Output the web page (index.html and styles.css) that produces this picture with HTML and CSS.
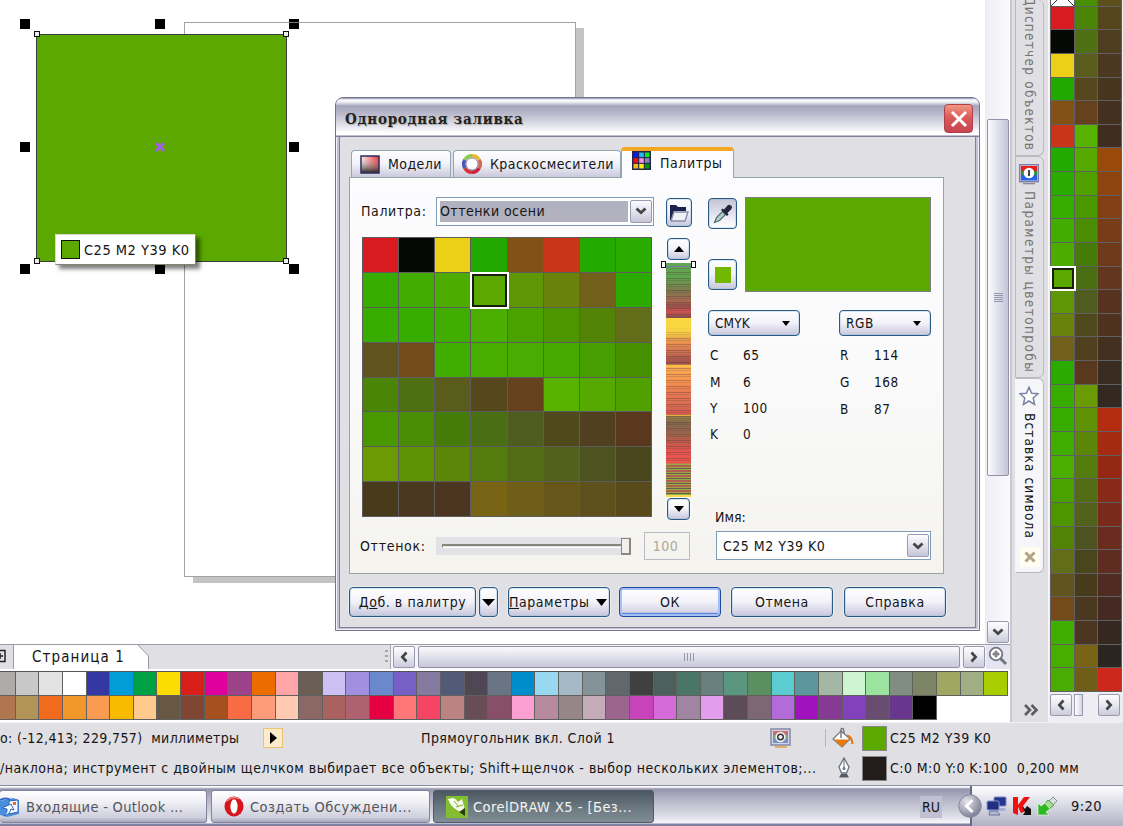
FILE: index.html
```html
<!DOCTYPE html>
<html lang="ru">
<head>
<meta charset="utf-8">
<title>CorelDRAW X5</title>
<link rel="stylesheet" href="styles.css">
</head>
<body>
<div class="app">
  <div class="workspace">
    <div class="document">
      <div class="doc-main">
        <div class="canvas">
          <div class="page-shadow"></div>
          <div class="page"></div>
          <i class="handle h1"></i><i class="handle h2"></i><i class="handle h3"></i>
          <i class="handle h4"></i><i class="handle h5"></i>
          <i class="handle h6"></i><i class="handle h7"></i><i class="handle h8"></i>
          <div class="shape">
            <i class="node n1"></i><i class="node n2"></i><i class="node n3"></i><i class="node n4"></i>
            <svg class="center-mark" width="10" height="10" viewBox="0 0 10 10"><path d="M1 1L9 9M9 1L1 9" stroke="#a65cf0" stroke-width="2.8"/></svg>
          </div>
          <div class="page-line"></div>
          <div class="tip"><i class="tip-swatch"></i><span>C25 M2 Y39 K0</span></div>
        </div>
        <div class="vscroll">
          <div class="vthumb"><i></i><i></i><i></i><i></i><i></i></div>
          <div class="sbtn vdown"><svg width="12" height="8" viewBox="0 0 12 8"><path d="M1.5 1.5L6 5.7L10.5 1.5" fill="none" stroke="#444" stroke-width="2.8"/></svg></div>
        </div>
      </div>
      <div class="doc-bottom">
        <div class="pages">
          <svg class="add-page" width="6" height="16" viewBox="0 0 6 16"><path d="M0 2.5H5V13.5H0M0 8H3M0 5V11" fill="none" stroke="#222" stroke-width="1.5"/></svg>
          <div class="page-tab">
            <svg width="136" height="24" viewBox="0 0 136 24"><path d="M0 0H125L135.5 11V24H0Z" fill="#fff"/><path d="M0.5 0V24M125 0L135.5 11V24" fill="none" stroke="#9a9aa4"/></svg>
            <span>Страница 1</span>
          </div>
          <div class="dots"></div>
        </div>
        <div class="hscroll">
          <div class="sbtn"><svg width="8" height="12" viewBox="0 0 8 12"><path d="M6.5 1.5L2.3 6L6.5 10.5" fill="none" stroke="#444" stroke-width="2.6"/></svg></div>
          <div class="hthumb"><i></i><i></i><i></i><i></i></div>
          <div class="sbtn"><svg width="8" height="12" viewBox="0 0 8 12"><path d="M1.5 1.5L5.7 6L1.5 10.5" fill="none" stroke="#444" stroke-width="2.6"/></svg></div>
        </div>
        <div class="zoomer"><svg width="20" height="20" viewBox="0 0 20 20"><circle cx="8" cy="8" r="6.3" fill="#fff" stroke="#74747c" stroke-width="1.8"/><path d="M8 4.5V11.5M4.5 8H11.5" stroke="#74747c" stroke-width="1.3"/><circle cx="8" cy="8" r="2.4" fill="none" stroke="#74747c"/><path d="M12.5 12.5L18 18" stroke="#74747c" stroke-width="2.8"/></svg></div>
      </div>
      <div class="doc-palette" id="docPalette"></div>
    </div>

    <div class="dockers">
      <div class="dtab t1"><span>Диспетчер объектов</span></div>
      <div class="dtab t2">
        <svg width="20" height="22" viewBox="0 0 20 22"><rect x=".7" y="1.7" width="18.6" height="17" fill="#d8d8ec" stroke="#7d7da8" stroke-width="1.4"/><rect x="2" y="3" width="16" height="5" fill="#e8201c"/><rect x="2" y="8" width="16" height="4" fill="#2a9030"/><rect x="2" y="12" width="16" height="5.5" fill="#2464e8"/><circle cx="10" cy="10" r="5.3" fill="#fff"/><path d="M10 7V13" stroke="#223" stroke-width="1.7"/><path d="M4 20.6H16" stroke="#8a8a9a" stroke-width="1.4"/></svg>
        <span>Параметры цветопробы</span>
      </div>
      <div class="dtab t3">
        <svg width="20" height="20" viewBox="0 0 20 20"><path d="M10 1.2L12.6 7.2L19 7.7L14.2 12L15.6 18.5L10 15L4.4 18.5L5.8 12L1 7.7L7.4 7.2Z" fill="#fff" stroke="#7984a0" stroke-width="1.5"/></svg>
        <span>Вставка символа</span>
        <div class="dclose"><svg width="12" height="12" viewBox="0 0 12 12"><path d="M1.5 1.5L10.5 10.5M10.5 1.5L1.5 10.5" stroke="#b3a386" stroke-width="3"/></svg></div>
      </div>
      <svg class="more" width="16" height="12" viewBox="0 0 16 12"><path d="M2 1L7 6L2 11M8.5 1L13.5 6L8.5 11" fill="none" stroke="#5c5c5c" stroke-width="2.6"/></svg>
    </div>

    <div class="side">
      <div class="side-palette" id="sidePalette"></div>
      <div class="side-scroll">
        <div class="sbtn"><svg width="8" height="12" viewBox="0 0 8 12"><path d="M6.5 1.5L2.3 6L6.5 10.5" fill="none" stroke="#444" stroke-width="2.6"/></svg></div>
        <div class="mini-thumb"></div>
        <div class="sbtn right"><svg width="8" height="12" viewBox="0 0 8 12"><path d="M1.5 1.5L5.7 6L1.5 10.5" fill="none" stroke="#444" stroke-width="2.6"/></svg></div>
      </div>
    </div>
  </div>

  <div class="status">
    <div class="status-row">
      <span class="coords">о: (-12,413; 229,757)&nbsp; миллиметры</span>
      <div class="play"><svg width="9" height="12" viewBox="0 0 9 12"><path d="M1 0L8 6L1 12Z" fill="#000"/></svg></div>
      <span class="object">Прямоугольник вкл. Слой 1</span>
      <svg class="proof" width="22" height="20" viewBox="0 0 22 20"><rect x="1" y="1" width="19" height="16" fill="#d5d5e5" stroke="#8080a0" stroke-width="1.4"/><rect x="3" y="3" width="15" height="4" fill="#c86c6c"/><rect x="3" y="7" width="15" height="4" fill="#77a477"/><rect x="3" y="11" width="15" height="4" fill="#6f92cc"/><circle cx="10.5" cy="9" r="5.2" fill="#eee"/><circle cx="10.5" cy="9" r="2.8" fill="none" stroke="#333" stroke-width="1.4"/><path d="M5 19H17" stroke="#dfa64c" stroke-width="1.6"/></svg>
      <i class="status-sep"></i>
      <svg class="fill-icon" width="22" height="22" viewBox="0 0 22 22"><path d="M9 4L18 12L10 20L1 12Z" fill="#fff" stroke="#777" stroke-width="1.2"/><path d="M2 12.5H17L10 20Z" fill="#e87a0c"/><path d="M9 11V3Q9 .8 11 1.5Q12 2 12 7" fill="none" stroke="#667" stroke-width="1.3"/><path d="M15 8.5Q20 9.5 20.5 17" fill="none" stroke="#e87a0c" stroke-width="2.2"/></svg>
      <i class="chip fill-chip"></i>
      <span class="chip-text">C25 M2 Y39 K0</span>
    </div>
    <div class="status-row second">
      <span class="hint">/наклона; инструмент с двойным щелчком выбирает все объекты; Shift+щелчок - выбор нескольких элементов;...</span>
      <svg class="pen-icon" width="14" height="22" viewBox="0 0 14 22"><path d="M7 1L12 10L9.5 16H4.5L2 10Z" fill="#fff" stroke="#6a7080" stroke-width="1.3"/><path d="M7 2V11" stroke="#6a7080"/><circle cx="7" cy="11.5" r="1.5" fill="#6a7080"/><path d="M4 17H10L12 20.5H2Z" fill="#555a68"/></svg>
      <i class="chip pen-chip"></i>
      <span class="chip-text">C:0 M:0 Y:0 K:100&nbsp; 0,200 мм</span>
    </div>
  </div>

  <div class="taskbar">
    <div class="task outlook">
      <svg width="20" height="22" viewBox="0 0 20 22"><path d="M0 5L13 2L19 4V18L7 21L0 19Z" fill="#4a8fdc"/><path d="M9 5L18 4V16L9 18Z" fill="#f5f9ff" stroke="#3563b0"/><path d="M0 4Q7 1 10 4" fill="none" stroke="#2b67c8" stroke-width="2"/><path d="M2 12L11 8L14 14L11 13Q10 18 4 20Q8 16 7 13Z" fill="#fff" stroke="#2b67c8"/><rect x="13" y="6" width="3" height="3" fill="#e06a3a"/></svg>
      <span>Входящие - Outlook ...</span>
    </div>
    <div class="task opera">
      <svg width="20" height="21" viewBox="0 0 20 21"><ellipse cx="10" cy="10.5" rx="9.5" ry="10" fill="#d6161c"/><ellipse cx="10" cy="10.5" rx="3.6" ry="7.2" fill="#fff"/><path d="M3 5Q9 -1 15 3" stroke="#f58080" fill="none" stroke-width="1.5"/></svg>
      <span>Создать Обсуждени...</span>
    </div>
    <div class="task corel">
      <svg width="22" height="22" viewBox="0 0 22 22"><rect width="22" height="22" fill="#84bc32"/><path d="M2 3L8 2L10 8L5 9Z" fill="#fff"/><path d="M5 9L9 2.5L12 6L16 3L18.5 12L14 16L8 12Z" fill="#f6fae8"/><path d="M8 5L13 11M10 11L17 9" stroke="#84a840"/><path d="M13 16L19 12L19 20Z" fill="#28400c"/></svg>
      <span>CorelDRAW X5 - [Без...</span>
    </div>
    <div class="lang">RU</div>
    <div class="tray">
      <div class="tray-arrow"><svg width="24" height="26" viewBox="0 0 24 26"><defs><radialGradient id="ball" cx=".35" cy=".3" r=".8"><stop offset="0" stop-color="#e4e4ec"/><stop offset="1" stop-color="#74748c"/></radialGradient></defs><circle cx="12" cy="13" r="11.3" fill="url(#ball)" stroke="#8a8aa0"/><path d="M14.5 7L8.5 13L14.5 19" fill="none" stroke="#fff" stroke-width="3"/></svg></div>
      <svg class="net" width="21" height="21" viewBox="0 0 21 21"><rect x="8" y="1" width="12" height="9" rx="1" fill="#27348c" stroke="#7d88c8"/><path d="M11 12H19L20 15H11Z" fill="#a9b0cc"/><rect x="1" y="5" width="12" height="9" rx="1" fill="#233080" stroke="#8994d0"/><path d="M4 15H11L14 19H3Z" fill="#b3b9d2" stroke="#6a739a"/></svg>
      <svg class="kav" width="20" height="21" viewBox="0 0 20 21"><path d="M1 1H6V9L12 1H18L11 10L14 15L9 17L6 11V19L1 17Z" fill="#f01010"/><path d="M10 10L13 13L15 10L19 13V19H11L13 16Z" fill="#111"/></svg>
      <svg class="usb" width="21" height="21" viewBox="0 0 21 21"><path d="M12 5L16 1L20 5L16 9Z" fill="#d8e0e0" stroke="#829a92"/><path d="M6 10L11 4L17 9L11 14Z" fill="#a4dc90" stroke="#4ea040"/><path d="M1 7L4 10L8 7L13 13L9 16L12 19H1Z" fill="#2cba20" stroke="#fff" stroke-width=".6"/></svg>
      <span class="clock">9:20</span>
    </div>
  </div>

  <div class="dialog">
    <div class="title"><span>Однородная заливка</span>
      <div class="close"><svg width="18" height="18" viewBox="0 0 18 18"><path d="M2 2L16 16M16 2L2 16" stroke="#fff" stroke-width="3"/></svg></div>
    </div>
    <div class="dialog-body">
      <div class="tabs">
        <div class="tab models">
          <svg width="20" height="19" viewBox="0 0 20 19"><defs><linearGradient id="mg" x1="0" y1="0" x2="0" y2="1"><stop offset="0" stop-color="#fff" stop-opacity="0"/><stop offset="1" stop-color="#222"/></linearGradient><linearGradient id="mr"><stop offset="0" stop-color="#f4eeee"/><stop offset="1" stop-color="#f01c20"/></linearGradient></defs><rect x="1" y="1" width="18" height="17" fill="url(#mr)"/><rect x="1" y="1" width="18" height="17" fill="url(#mg)" stroke="#2c2c60" stroke-width="1.5"/></svg>
          <span>Модели</span>
        </div>
        <div class="tab mixers">
          <svg width="22" height="22" viewBox="0 0 22 22"><g fill="none" stroke-width="3.6"><path d="M11 2.8A8.2 8.2 0 0 1 18.1 6.9" stroke="#e8b830"/><path d="M18.1 6.9A8.2 8.2 0 0 1 18.1 15.1" stroke="#d06a50"/><path d="M18.1 15.1A8.2 8.2 0 0 1 11 19.2" stroke="#cc2440"/><path d="M11 19.2A8.2 8.2 0 0 1 3.9 15.1" stroke="#d83030"/><path d="M3.9 15.1A8.2 8.2 0 0 1 3.9 6.9" stroke="#4858b8"/><path d="M3.9 6.9A8.2 8.2 0 0 1 11 2.8" stroke="#8cc850"/></g><circle cx="11" cy="11" r="6" fill="#fff" stroke="#8a88b0"/></svg>
          <span>Краскосмесители</span>
        </div>
        <div class="tab palettes">
          <svg width="19" height="19" viewBox="0 0 19 19"><rect width="19" height="19" fill="#22264e"/><path d="M1.5 1.5h4.6v4.6h-4.6z" fill="#0a18f0"/><path d="M7.2 1.5h4.6v4.6h-4.6z" fill="#28b8f0"/><path d="M12.9 1.5h4.6v4.6h-4.6z" fill="#10e820"/><path d="M1.5 7.2h4.6v4.6h-4.6z" fill="#f01010"/><path d="M7.2 7.2h4.6v4.6h-4.6z" fill="#f890f0"/><path d="M12.9 7.2h4.6v4.6h-4.6z" fill="#8888a8"/><path d="M1.5 12.9h4.6v4.6h-4.6z" fill="#f8b810"/><path d="M7.2 12.9h4.6v4.6h-4.6z" fill="#f8f010"/><path d="M12.9 12.9h4.6v4.6h-4.6z" fill="#08900c"/></svg>
          <span>Палитры</span>
        </div>
      </div>
      <div class="panel">
        <div class="col-left">
          <div class="palette-row">
            <label>Палитра:</label>
            <div class="combo palette-combo"><span class="sel">Оттенки осени</span><div class="drop"><svg width="12" height="8" viewBox="0 0 12 8"><path d="M1.5 1.5L6 5.7L10.5 1.5" fill="none" stroke="#444" stroke-width="2.8"/></svg></div></div>
          </div>
          <div class="swatches" id="swatches"></div>
          <div class="tint-row">
            <label>Оттенок:</label>
            <div class="slider"><i class="track"></i><i class="knob"></i></div>
            <div class="tint-value">100</div>
          </div>
        </div>
        <div class="col-mid">
          <div class="btn open"><svg width="22" height="20" viewBox="0 0 22 20"><path d="M2 17V2H8L10 4H18V8H6L3 17Z" fill="#1c2250"/><path d="M6 9H20L17 18H3Z" fill="#eef0f8" stroke="#8a8ea8" stroke-width="1.4"/></svg></div>
          <div class="btn small up"><svg width="10" height="6" viewBox="0 0 10 6"><path d="M5 0L10 6H0Z" fill="#000"/></svg></div>
          <div class="strip"><i class="strip-mark"></i></div>
          <div class="btn small"><svg width="10" height="6" viewBox="0 0 10 6"><path d="M0 0H10L5 6Z" fill="#000"/></svg></div>
        </div>
        <div class="col-right">
          <div class="sample-row">
            <div class="tools">
              <div class="btn tool pressed"><svg width="20" height="20" viewBox="0 0 20 20"><path d="M1.5 18.5L3.5 13.5L9.5 7.5L12.5 10.5L6.5 16.5Z" fill="#b2d0c8" stroke="#4b6c70" stroke-width="1.2"/><path d="M8 6L14 12L15.5 10.5L14.5 9L18 5.5Q20 3 18 1.5Q16 0 14 2L11 5.5L9.5 4.5Z" fill="#24263e"/></svg></div>
              <div class="btn tool"><i class="tool-color"></i></div>
            </div>
            <div class="preview"></div>
          </div>
          <div class="model-row">
            <div class="btn model"><span>CMYK</span><svg width="8" height="5" viewBox="0 0 8 5"><path d="M0 0H8L4 5Z" fill="#000"/></svg></div>
            <div class="btn model"><span class="rgb">RGB</span><svg width="8" height="5" viewBox="0 0 8 5"><path d="M0 0H8L4 5Z" fill="#000"/></svg></div>
          </div>
          <div class="values">
            <dl class="cmyk"><dt>C</dt><dd>65</dd><dt>M</dt><dd>6</dd><dt>Y</dt><dd>100</dd><dt>K</dt><dd>0</dd></dl>
            <dl class="rgbv"><dt>R</dt><dd>114</dd><dt>G</dt><dd>168</dd><dt>B</dt><dd>87</dd></dl>
          </div>
          <label class="name-label">Имя:</label>
          <div class="combo name-combo"><span>C25 M2 Y39 K0</span><div class="drop"><svg width="12" height="8" viewBox="0 0 12 8"><path d="M1.5 1.5L6 5.7L10.5 1.5" fill="none" stroke="#444" stroke-width="2.8"/></svg></div></div>
        </div>
      </div>
      <div class="actions">
        <div class="btn b-add"><span>Д<u>о</u>б. в палитру</span></div>
        <div class="btn b-drop"><svg width="13" height="7" viewBox="0 0 13 7"><path d="M0 0H13L6.5 7Z" fill="#000"/></svg></div>
        <div class="btn b-par"><span><u>П</u>араметры</span><svg width="11" height="7" viewBox="0 0 11 7"><path d="M0 0H11L5.5 7Z" fill="#000"/></svg></div>
        <div class="btn b-ok"><span>ОК</span></div>
        <div class="btn b-cancel"><span>Отмена</span></div>
        <div class="btn b-help"><span>Справка</span></div>
      </div>
    </div>
  </div>
</div>
<script src="app.js"></script>
</body>
</html>
```
FILE: styles.css
```css
* { box-sizing: border-box; }
body { margin: 0; background: #e0dfe4; overflow: hidden; color: #151515;
  font-family: "DejaVu Sans Condensed", "DejaVu Sans", "Noto Sans", sans-serif; font-stretch: condensed; font-size: 14px; white-space: nowrap; }
svg { display: block; flex: none; }
i { display: block; flex: none; }
.app { position: relative; width: 1123px; height: 826px; display: flex; flex-direction: column; overflow: hidden; }
.workspace { display: flex; height: 722px; flex: none; }

/* document window */
.document { width: 1010px; display: flex; flex-direction: column; background: #fff; flex: none; }
.doc-main { display: flex; height: 644px; }
.canvas { position: relative; width: 986px; height: 644px; background: #fff; overflow: hidden; border-right: 1px solid #ececf2; }
.page-shadow { position: absolute; left: 193px; top: 28px; width: 391px; height: 555px; background: #c3c3c3; }
.page { position: absolute; left: 184px; top: 22px; width: 392px; height: 555px; background: #fff; border: 1px solid #a2a2a2; }
.page-line { position: absolute; left: 289px; top: 22px; width: 10px; height: 1px; background: #777; }
.handle { position: absolute; width: 10px; height: 10px; background: #000; }
.h1, .h2, .h3 { top: 19px; } .h4, .h5 { top: 142px; } .h6, .h7, .h8 { top: 264px; }
.h1, .h4, .h6 { left: 20px; } .h2, .h7 { left: 155px; } .h3, .h5, .h8 { left: 289px; }
.shape { position: absolute; left: 36px; top: 34px; width: 251px; height: 228px; background: #5aa800; border: 1px solid #3b3b3b; }
.node { position: absolute; width: 6px; height: 6px; background: #eee; border: 1px solid #111; }
.n1 { left: -3px; top: -4px; } .n2 { right: -3px; top: -4px; } .n3 { left: -3px; bottom: -3px; } .n4 { right: -3px; bottom: -3px; }
.center-mark { position: absolute; left: 118px; top: 107px; }
.tip { position: absolute; left: 55px; top: 234px; width: 141px; height: 31px; display: flex; align-items: center; padding-left: 5px; gap: 4px; background: #fff; border: 1px solid #ddd8c8; border-right-color: #888070; border-bottom-color: #888070; box-shadow: 4px 4px 4px rgba(0,0,0,.5); font-size: 14.5px; letter-spacing: .5px; }
.tip-swatch { width: 19px; height: 19px; background: #5aa800; border: 1px solid #111; }

/* scroll bars */
.vscroll { width: 24px; padding: 119px 1px 1px 1px; display: flex; flex-direction: column; justify-content: space-between; background: linear-gradient(90deg, #eeeef4, #fbfbfe); }
.vthumb { height: 357px; border: 1px solid #9292a6; border-radius: 2px; background: linear-gradient(90deg, #fbfbfe, #e3e3ee 45%, #c4c4d8); display: flex; flex-direction: column; align-items: center; justify-content: center; gap: 1px; }
.vthumb i { width: 9px; height: 1px; background: #8f98ac; }
.sbtn { width: 22px; height: 22px; flex: none; border: 1px solid #9a9aae; border-radius: 2px; background: linear-gradient(#fdfdff, #e8e8f0 50%, #cbcbdb); display: flex; align-items: center; justify-content: center; }
.doc-bottom { height: 25px; display: flex; background: #e0dfe4; border-top: 1px solid #9c9ca6; }
.pages { width: 391px; display: flex; align-items: flex-start; background: #e0dfe4; border-right: 1px solid #aaaab2; }
.add-page { margin: 3px 7px 0 0; }
.page-tab { position: relative; width: 136px; height: 24px; }
.page-tab span { position: absolute; left: 19px; top: 3px; font-size: 15px; letter-spacing: 1.1px; }
.dots { margin: 5px 0 0 236px; width: 3px; height: 15px; background: repeating-linear-gradient(#a8a8a0 0 2px, transparent 2px 5px); }
.hscroll { display: flex; gap: 3px; padding: 1px 0 0 2px; width: 595px; background: #f4f4fa; }
.hthumb { width: 542px; height: 22px; border: 1px solid #9292a6; border-radius: 2px; background: linear-gradient(#fbfbfe, #e0e0ea 50%, #c8c8d9); display: flex; align-items: center; justify-content: center; gap: 2px; }
.hthumb i { width: 1px; height: 8px; background: #8f98ac; }
.zoomer { width: 24px; padding: 1px 0 0 2px; background: #e5e5f2; }
.doc-palette { height: 49px; margin: 2px 0 2px -8px; width: 1016px; display: grid; grid-template-columns: repeat(43, 1fr); grid-template-rows: 24px 24px; background: #fff; border-top: 1px solid #555; }
.doc-palette i { border-right: 1px solid #606060; border-bottom: 1px solid #606060; }

/* dockers */
.dockers { width: 39px; background: #e0dfe3; padding-left: 4px; border-left: 2px solid #c9c8cd; border-right: 1px solid #f7f7f8; display: flex; flex-direction: column; flex: none; }
.dtab { width: 29px; border: 1px solid #bbb9be; border-radius: 0 6px 6px 0; margin-left: -1px; display: flex; flex-direction: column; align-items: center; color: #77756f; flex: none; }
.dtab svg { margin-right: 2px; }
.dtab span { writing-mode: vertical-rl; font-size: 13.5px; line-height: 17px; flex: none; }
.t1 { height: 156px; border-top: 0; overflow: hidden; justify-content: flex-end; padding-bottom: 4px; }
.t1 span { letter-spacing: 1.25px; }
.t2 { height: 222px; padding-top: 6px; gap: 6px; }
.t2 span { letter-spacing: 1.4px; }
.t3 { height: 195px; padding-top: 7px; background: #f6f6f8; border-left-color: #f6f6f8; color: #111; }
.t3 span { margin-top: 7px; height: 134px; letter-spacing: 1.15px; }
.dclose { width: 20px; height: 20px; background: #fffef0; display: flex; align-items: center; justify-content: center; flex: none; }
.dclose svg { margin: 0; }
.more { margin: 131px 0 0 7px; }

/* vertical palette */
.side { width: 74px; background: #eeedf3; flex: none; overflow: hidden; padding-left: 1px; }
.side-palette { width: 72px; height: 709px; margin-top: -17px; display: grid; grid-template-columns: repeat(3, 1fr); grid-template-rows: repeat(30, 1fr); grid-auto-flow: column; border-left: 1px solid #606060; }
.side-palette i { border-right: 1px solid #606060; border-bottom: 1px solid #606060; }
.side-palette .none { background: linear-gradient(45deg, transparent 48.5%, #333 48.5% 51.5%, transparent 51.5%), linear-gradient(-45deg, transparent 48.5%, #333 48.5% 51.5%, transparent 51.5%), #fff; }
.side-palette .picked, .swatches .picked { border: 1px solid #fff; outline: 1px solid #fff; box-shadow: inset 0 0 0 2px #16200a; z-index: 1; }
.side-scroll { display: flex; padding-top: 2px; gap: 2px; height: 30px; }
.mini-thumb { width: 9px; height: 22px; border: 1px solid #9a9aae; background: linear-gradient(90deg, #fff, #d5d5e3); }
.side-scroll .right { margin-left: 13px; }

/* status bar */
.status { height: 63px; background: #e0dfe4; border-top: 1px solid #f2f2f4; flex: none; }
.status-row { display: flex; height: 30px; align-items: center; }
.coords { width: 263px; letter-spacing: .37px; flex: none; }
.play { width: 20px; height: 20px; background: #fdeccb; border: 1px solid #eec172; display: flex; align-items: center; justify-content: center; flex: none; }
.object { width: 350px; margin-left: 138px; letter-spacing: .42px; flex: none; }
.proof { margin-right: 33px; margin-left: -1px; }
.status-sep { width: 1px; height: 18px; background: #b5b5bb; margin-right: 6px; }
.fill-icon { margin-right: 8px; }
.chip { width: 25px; height: 25px; border: 1px solid #888; }
.fill-chip { background: #5aa800; } .pen-chip { background: #231c1a; }
.chip-text { margin-left: 3px; letter-spacing: .42px; }
.hint { width: 837px; letter-spacing: .5px; flex: none; }
.pen-icon { margin-right: 11px; }

/* taskbar */
.taskbar { height: 41px; display: flex; flex: none; padding-top: 4px; border-top: 1px solid #8d8da6; background: linear-gradient(#fff 0 1px, #9494ac 3px, #b2b2c4 12px, #dcdce6 30px, #f5f5fa 37px, #8080a0 38px); }
.task { height: 33px; display: flex; align-items: center; border: 1px solid #83839c; border-radius: 3px; background: linear-gradient(#fff, #f0f0f6 35%, #cfcfde 85%, #a6a6bc); color: #55565c; font-size: 14.5px; flex: none; }
.outlook { width: 207px; border-left: 0; margin-right: 4px; gap: 6px; letter-spacing: .3px; }
.opera { width: 219px; margin-right: 3px; padding-left: 12px; gap: 6px; letter-spacing: .5px; }
.corel { width: 221px; padding-left: 12px; gap: 5px; color: #f3f3f3; background: linear-gradient(#4b5761, #69767e 50%, #818d94); border-color: #505a68; letter-spacing: .45px; }
.lang { width: 22px; height: 22px; margin: 6px 0 0 266px; background: #c0c0d2; display: flex; align-items: center; justify-content: center; flex: none; }
.tray { margin: -4px 0 0 28px; width: 155px; height: 40px; border-left: 2px solid #6a6a88; background: linear-gradient(#fdfdff, #e8e8f0 30%, #c9c9d8 70%, #b0b0c4); display: flex; align-items: center; }
.tray-arrow { margin-left: -14px; width: 24px; }
.net { margin-left: 4px; } .kav { margin-left: 5px; } .usb { margin-left: 5px; }
.clock { margin-left: 13px; font-size: 14.5px; letter-spacing: .4px; }

/* dialog */
.dialog { position: absolute; left: 335px; top: 97px; width: 645px; height: 534px; border: 1px solid #73738c; border-radius: 8px 8px 0 0; background: #c4c3d4; box-shadow: inset 0 0 0 1px #f2f2f8; padding: 0 3px 3px 3px; }
.title { height: 39px; margin: 0 -3px; border-radius: 7px 7px 0 0; display: flex; align-items: center; justify-content: space-between; padding: 2px 6px 0 9px; background: linear-gradient(#9090aa 0, #fff 2px, #f0f0f6 4px, #a4a4bc 8px, #babacc 16px, #e4e4ec 28px, #fff 35px, #fff 37px, #8080a0 38px); font-family: "DejaVu Serif Condensed", "DejaVu Serif", serif; font-weight: bold; font-size: 15px; letter-spacing: .75px; color: #222; text-shadow: 1px 1px 1px #aaa; }
.close { width: 29px; height: 29px; border: 1px solid #b04048; border-radius: 4px; background: linear-gradient(#f09a84, #dd5a5c 45%, #c64450); display: flex; align-items: center; justify-content: center; }
.dialog-body { height: 491px; background: #e0dfe4; border: 1px solid #80809a; border-top: 0; padding: 11px 0 0 9px; }
.tabs { display: flex; align-items: flex-end; height: 29px; padding-left: 2px; }
.tab { display: flex; align-items: center; border: 1px solid #91a7b4; border-bottom: 0; border-radius: 4px 4px 0 0; background: linear-gradient(#fff, #f2f2fa 50%, #c9c9dc); height: 27px; letter-spacing: .42px; }
.models { width: 100px; margin-right: 2px; padding-left: 8px; gap: 8px; }
.mixers { width: 168px; padding-left: 7px; gap: 7px; }
.palettes { height: 31px; width: 113px; margin-bottom: -1px; position: relative; background: #fcfcfe; border-top: 4px solid #f5a623; padding: 0 0 4px 10px; gap: 9px; letter-spacing: .55px; }
.palettes svg { align-self: flex-start; }
.panel { width: 595px; height: 397px; border: 1px solid #97a4a4; background: linear-gradient(#fcfcfe, #fafafb 50%, #f4f3ee); padding: 19px 12px 13px 11px; display: flex; }
.combo { display: flex; background: #fff; border: 1px solid #7f9db9; padding: 2px 1px 2px 3px; align-items: center; justify-content: space-between; }
.drop { width: 22px; height: 100%; border: 1px solid #9a9ab2; border-radius: 2px; background: linear-gradient(#fafaff, #dedeea 60%, #c5c5d6); display: flex; align-items: center; justify-content: center; flex: none; }
.col-left { width: 293px; display: flex; flex-direction: column; flex: none; }
.palette-row { display: flex; height: 28px; align-items: center; }
.palette-row label { width: 75px; letter-spacing: .6px; flex: none; }
.palette-combo { width: 218px; height: 29px; flex: none; }
.sel { width: 188px; height: 21px; line-height: 21px; background: #b1b1bf; letter-spacing: .45px; }
.swatches { width: 290px; height: 280px; margin: 12px 0 0 1px; display: grid; grid-template-columns: repeat(8, 1fr); grid-template-rows: repeat(8, 1fr); border-left: 1px solid #5c5c5c; border-top: 1px solid #5c5c5c; flex: none; }
.swatches i { border-right: 1px solid #5c5c5c; border-bottom: 1px solid #5c5c5c; }
.tint-row { display: flex; width: 330px; height: 28px; margin-top: auto; align-items: center; }
.tint-row label { width: 75px; margin-left: -1px; letter-spacing: .7px; flex: none; }
.slider { width: 195px; height: 18px; background: #e2e1e6; display: flex; align-items: center; padding-left: 6px; margin-left: 1px; flex: none; }
.track { width: 179px; height: 4px; border-top: 2px solid #87867c; border-bottom: 1px solid #fff; border-left: 1px solid #87867c; }
.knob { width: 10px; height: 17px; border: 1px solid #8a887c; border-right-width: 2px; border-bottom-width: 2px; background: #f0efe8; }
.tint-value { width: 46px; height: 28px; margin-left: 13px; border: 1px solid #b9bcc6; display: flex; align-items: center; justify-content: center; color: #aaa99c; padding-right: 3px; letter-spacing: .5px; flex: none; }
.btn { border: 1px solid #285a86; border-radius: 4px; background: linear-gradient(#fff, #f2f2f9 50%, #c7c7dc); display: flex; align-items: center; justify-content: center; box-shadow: inset 0 0 0 1px rgba(150,185,220,.35), 0 0 0 1px rgba(255,255,255,.4); flex: none; }
.col-mid { width: 26px; margin-left: 12px; display: flex; flex-direction: column; padding-top: 1px; flex: none; }
.open { height: 29px; margin-bottom: 11px; }
.small { width: 23px; height: 22px; flex: none; }
.strip { position: relative; z-index: 1; width: 25px; height: 234px; margin: 3px 0 1px 0; flex: none;
  background:
    linear-gradient(transparent 56px, rgba(248,216,64,.95) 56px 64px, rgba(248,200,64,0) 76px, transparent 102px, #f8c048 102px 104px, transparent 104px 152px, #e0b040 152px 153px, transparent 153px 232px, #f8dc50 232px),
    repeating-linear-gradient(rgba(70,60,60,0) 0 3px, rgba(80,60,60,.35) 3px 4px, transparent 4px 5px, rgba(80,60,60,.2) 5px 6px),
    linear-gradient(#62a658 0, #5fa34e 14px, #807850 28px, #a86850 38px, #94504c 43px, #d25250 48px, #84504c 55px, #fad844 55px, #f4c048 68px, #e88a50 82px, #c06450 92px, #9c504c 101px, #fcb054 102px, #f69450 118px, #e87850 130px, #d46854 145px, #de5450 151px, #a08448 152px, #80684c 160px, #a0644c 172px, #c4584c 180px, #e45450 188px, #ee5450 200px, #98a044 201px, #b8a840 234px); }
.strip::after { content: ""; position: absolute; left: 0; top: 201px; width: 25px; height: 31px; background: repeating-linear-gradient(#8fae44 0 1px, #b06050 1px 3px, #a0a044 3px 4px, #6c5c50 4px 5px); }
.strip-mark { position: absolute; left: -5px; top: -2px; width: 35px; height: 7px; background: linear-gradient(#fff, #fff) 1px 1px/3px 5px no-repeat, linear-gradient(#fff, #fff) 31px 1px/3px 5px no-repeat, linear-gradient(#111, #111) 0 0/5px 7px no-repeat, linear-gradient(#111, #111) 30px 0/5px 7px no-repeat, linear-gradient(#7878a0, #7878a0) 5px 5px/25px 1px no-repeat; }
.col-mid .small { margin-left: 1px; }
.col-right { width: 223px; margin-left: 16px; display: flex; flex-direction: column; flex: none; }
.sample-row { display: flex; height: 94px; justify-content: space-between; flex: none; }
.tools { display: flex; flex-direction: column; gap: 30px; padding-top: 1px; }
.tool { width: 29px; height: 31px; }
.pressed { background: linear-gradient(#c4c4d4, #e8e8f2 60%, #fff); }
.tool-color { width: 16px; height: 16px; background: #72b800; }
.preview { width: 186px; height: 95px; background: #5aa800; border: 1px solid #808080; }
.model-row { display: flex; gap: 39px; margin-top: 19px; flex: none; }
.model { width: 92px; height: 26px; padding: 0 9px 0 6px; justify-content: space-between; font-size: 13.5px; letter-spacing: .1px; }
.model .rgb { letter-spacing: .6px; }
.values { display: flex; margin-top: 6px; font-size: 13.5px; letter-spacing: .5px; }
dl { margin: 0; display: grid; grid-template-columns: 33px 60px; grid-auto-rows: 26.4px; align-items: center; align-content: start; }
dt, dd { margin: 0; }
.cmyk { width: 131px; padding-left: 2px; }
.rgbv { padding-left: 1px; grid-template-columns: 34px 50px; grid-auto-rows: 26.8px; }
.name-label { margin: auto 0 6px 7px; line-height: 16px; }
.name-combo { width: 215px; height: 29px; margin-left: 8px; padding-left: 6px; letter-spacing: .5px; flex: none; }
.actions { display: flex; margin-top: 13px; letter-spacing: .55px; }
.actions .btn { height: 30px; }
.b-add { width: 127px; }
.b-drop { width: 19px; margin-left: 3px; }
.b-par { width: 102px; margin-left: 10px; }
.actions .b-par { justify-content: space-between; padding: 0 2px 0 0; }
.b-ok { width: 102px; margin-left: 9px; }
.actions .b-ok { border-color: #1c4ca0; box-shadow: inset 0 0 0 2px #a4c0f4, inset 0 -3px 1px #4a76dc; }
.b-cancel { width: 102px; margin-left: 10px; }
.b-help { width: 102px; margin-left: 11px; }
```
FILE: app.js
```js
const autumn = `d91a20 060806 ecd018 22a900 835016 c83518 22aa00 2aab00
37ac00 42ad00 4cad00 5aa800 5e9606 68820c 715f1a 2bab00
36ad00 36ad00 41ad00 4cae00 49a200 4d9600 538306 616d18
62521e 744a1a 3fae00 47ae00 4aac00 47a800 479e00 469000
4a8507 4f7012 5a5c1c 56481c 66411d 57b300 56a900 50a000
499800 4a8c03 457c09 496e14 4f5c20 4e4a1c 51401f 5a381d
6a9b04 5f9205 5b8608 537b0d 516c15 52611c 4c5320 49451d
483b1c 4a3820 4c3521 786414 6e5e18 665619 5e501c 594a1c`.split(/\s+/);

const autumnTail = `5e501c 54451c 4f3d1f 4c3820 493420 43301f 3f2e20 9a4a08 8d4510 823f14
783c18 6f391c 63361e 57331f 4f3120 453020 3a2c20 342920 b42c10 a42a10
942812 882a18 7a2a1a 6b2c20 5e2c20 502b21 452a24 352820 2a251e cc281c`.split(/\s+/);

const documentColors = `adacab c8c8c8 e3e3e3 ffffff 3537a2 009dd9 00a044 fbdd00 da1f1b e0009c
9b4289 ec6c00 ffa5a8 6b5e54 cdc0f3 a28fdf 6a88cb 765fc5 867aa0 515b78
4f4754 697585 008dcb 99d8f1 a5b9c5 84939a 60686c 404040 4e605b 4a7665
68817e 5b9681 5a8f61 5bcdd0 5b979d a4b7a5 cff4d0 9ae49f 818d80 7d8565
a0a760 a1b084 a8cd00
b0774f b29459 f26b1c f2972a f99c52 f8bb00 ffca8c 665843 7f4733 a5501e
f86b45 fe9b78 ffcab1 8c6865 a9625f ae6270 e50042 ff7778 f54464 b98482
684d57 885068 fba0d0 b78a9e 968688 c3acb8 9c658f c842b9 d46bd8 a184a2
e29eeb 5b4c57 7d6777 b36bdc a012bd 863a93 8341bd 684d70 68378d 000000`.split(/\s+/);

function fill(id, colors, picked) {
  const box = document.getElementById(id);
  colors.forEach((c, n) => {
    const cell = document.createElement('i');
    if (c === 'none') cell.className = 'none';
    else cell.style.backgroundColor = '#' + c;
    if (n === picked) cell.className = 'picked';
    box.appendChild(cell);
  });
}

fill('swatches', autumn, 11);
fill('sidePalette', ['none', ...autumn.slice(0, 29), ...autumn.slice(31, 61), ...autumnTail], 12);
fill('docPalette', documentColors, -1);
```
